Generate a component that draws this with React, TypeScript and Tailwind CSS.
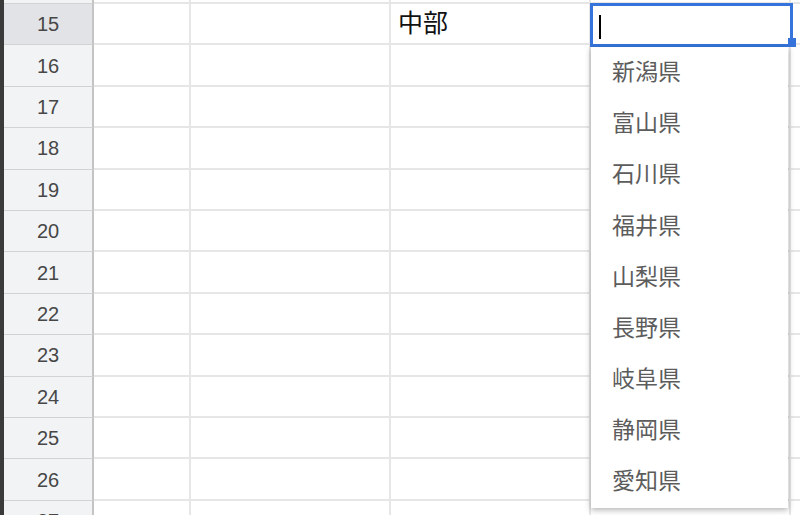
const rows = [15, 16, 17, 18, 19, 20, 21, 22, 23, 24, 25, 26, 27];
const options = ["新潟県", "富山県", "石川県", "福井県", "山梨県", "長野県", "岐阜県", "静岡県", "愛知県"];

function Row({ num, children }: { num?: number; children?: React.ReactNode }) {
  const active = num === 15;
  return (
    <div className="flex h-[41.42px] shrink-0">
      <div
        className={`flex w-[90px] shrink-0 items-center justify-center border-r-2 border-b border-r-[#c4c4c4] border-b-[#d2d2d2] text-[20px] text-[#474747] ${
          active ? "bg-[#e1e3e6]" : "bg-[#f2f3f5]"
        }`}
      >
        {num}
      </div>
      <div className="w-[97px] shrink-0 border-r-2 border-b-2 border-[#e6e6e6]" />
      <div className="w-[200px] shrink-0 border-r-2 border-b-2 border-[#e6e6e6]" />
      <div className="flex w-[200px] shrink-0 items-center border-r-2 border-b-2 border-[#e6e6e6] pb-[3px] pl-[7px] text-[25px] text-[#111]">
        {children}
      </div>
      <div className="w-[200px] shrink-0 border-r-2 border-b-2 border-[#e6e6e6]" />
      <div className="w-[20px] shrink-0 border-b-2 border-[#e6e6e6]" />
    </div>
  );
}

export default function App() {
  return (
    <div
      className="relative flex h-[515px] w-[800px] overflow-hidden bg-white"
      style={{ fontFamily: '"Liberation Sans", Arial, "Noto Sans CJK JP", sans-serif' }}
    >
      <div className="w-[4px] shrink-0 bg-[#3a3a3a]" />
      <div className="flex flex-col">
        <div className="flex h-[4px] shrink-0">
          <div className="w-[90px] shrink-0 border-r-2 border-b border-r-[#c4c4c4] border-b-[#d2d2d2] bg-[#f2f3f5]" />
          <div className="w-[97px] shrink-0 border-r-2 border-b-2 border-[#e6e6e6]" />
          <div className="w-[200px] shrink-0 border-r-2 border-b-2 border-[#e6e6e6]" />
          <div className="w-[200px] shrink-0 border-r-2 border-b-2 border-[#e6e6e6]" />
          <div className="w-[200px] shrink-0 border-r-2 border-b-2 border-[#e6e6e6]" />
          <div className="w-[20px] shrink-0 border-b-2 border-[#e6e6e6]" />
        </div>
        {rows.map((n) => (
          <Row key={n} num={n}>
            {n === 15 ? <span style={{ fontFamily: '"Noto Sans CJK JP", sans-serif' }}>中部</span> : null}
          </Row>
        ))}
      </div>

      {/* selected cell editor */}
      <div className="absolute left-[590px] top-[3px] h-[44px] w-[203px] border-[3px] border-[#3674db] bg-white">
        <div className="ml-[6px] mt-[9px] h-[24px] w-[2px] bg-black" />
      </div>
      <div className="absolute left-[788px] top-[38px] h-[9px] w-[8px] bg-[#3674db]" />

      {/* dropdown */}
      <div
        className="absolute left-[591px] top-[47px] flex h-[461px] w-[197px] flex-col bg-white shadow-[0_2px_6px_rgba(0,0,0,0.3)]"
        style={{ fontFamily: '"Noto Sans CJK JP", sans-serif' }}
      >
        {options.map((o) => (
          <div key={o} className="flex h-[51.1px] shrink-0 items-center pb-[4px] pl-[21px] text-[23px] text-[#5c5c5c]">
            {o}
          </div>
        ))}
      </div>
    </div>
  );
}
